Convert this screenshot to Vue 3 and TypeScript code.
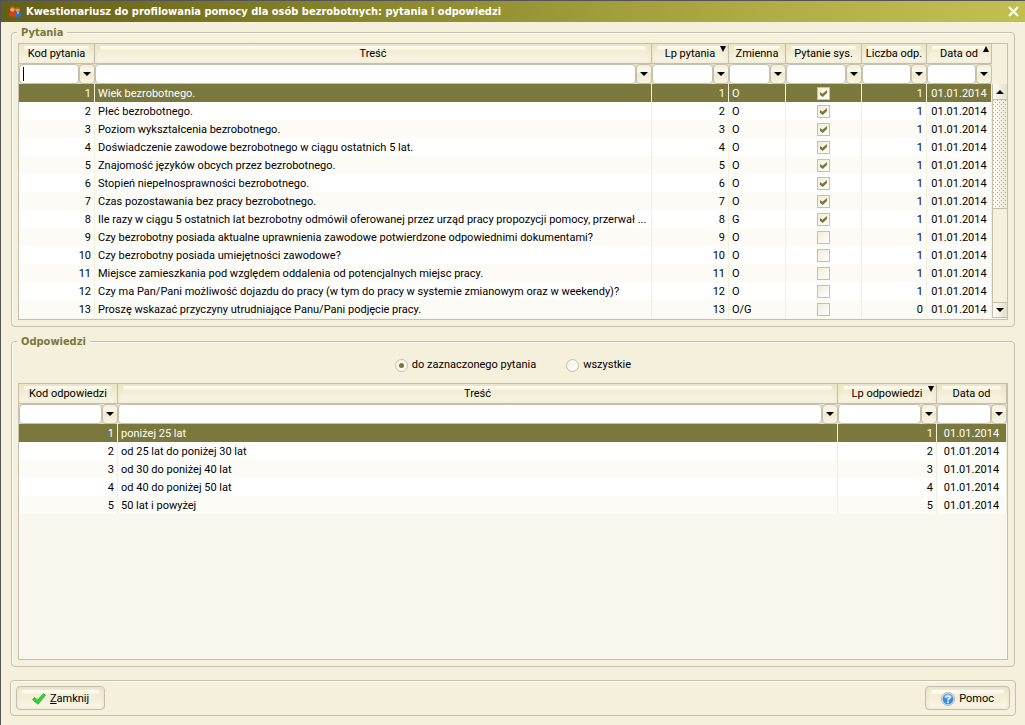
<script setup lang="ts">
import { ref } from 'vue'

interface Column {
  key: string
  label: string
  cls: string
  sort?: 'down' | 'up'
}

interface Question {
  code: number
  text: string
  variable: string
  system: boolean
  answers: number
}

interface Answer {
  code: number
  text: string
}

const questionColumns: Column[] = [
  { key: 'code', label: 'Kod pytania', cls: 'w76' },
  { key: 'text', label: 'Treść', cls: 'auto' },
  { key: 'order', label: 'Lp pytania', cls: 'w77', sort: 'down' },
  { key: 'variable', label: 'Zmienna', cls: 'w57' },
  { key: 'system', label: 'Pytanie sys.', cls: 'w76' },
  { key: 'answers', label: 'Liczba odp.', cls: 'w65' },
  { key: 'date', label: 'Data od', cls: 'w65', sort: 'up' },
]

const answerColumns: Column[] = [
  { key: 'code', label: 'Kod odpowiedzi', cls: 'w99' },
  { key: 'text', label: 'Treść', cls: 'auto' },
  { key: 'order', label: 'Lp odpowiedzi', cls: 'w99', sort: 'down' },
  { key: 'date', label: 'Data od', cls: 'w70' },
]

const date = '01.01.2014'

const questions: Question[] = [
  { code: 1, text: 'Wiek bezrobotnego.', variable: 'O', system: true, answers: 1 },
  { code: 2, text: 'Płeć bezrobotnego.', variable: 'O', system: true, answers: 1 },
  { code: 3, text: 'Poziom wykształcenia bezrobotnego.', variable: 'O', system: true, answers: 1 },
  { code: 4, text: 'Doświadczenie zawodowe bezrobotnego w ciągu ostatnich 5 lat.', variable: 'O', system: true, answers: 1 },
  { code: 5, text: 'Znajomość języków obcych przez bezrobotnego.', variable: 'O', system: true, answers: 1 },
  { code: 6, text: 'Stopień niepełnosprawności bezrobotnego.', variable: 'O', system: true, answers: 1 },
  { code: 7, text: 'Czas pozostawania bez pracy bezrobotnego.', variable: 'O', system: true, answers: 1 },
  { code: 8, text: 'Ile razy w ciągu 5 ostatnich lat bezrobotny odmówił oferowanej przez urząd pracy propozycji pomocy, przerwał ...', variable: 'G', system: true, answers: 1 },
  { code: 9, text: 'Czy bezrobotny posiada aktualne uprawnienia zawodowe potwierdzone odpowiednimi dokumentami?', variable: 'O', system: false, answers: 1 },
  { code: 10, text: 'Czy bezrobotny posiada umiejętności zawodowe?', variable: 'O', system: false, answers: 1 },
  { code: 11, text: 'Miejsce zamieszkania pod względem oddalenia od potencjalnych miejsc pracy.', variable: 'O', system: false, answers: 1 },
  { code: 12, text: 'Czy ma Pan/Pani możliwość dojazdu do pracy (w tym do pracy w systemie zmianowym oraz w weekendy)?', variable: 'O', system: false, answers: 1 },
  { code: 13, text: 'Proszę wskazać przyczyny utrudniające Panu/Pani podjęcie pracy.', variable: 'O/G', system: false, answers: 0 },
]

const answers: Answer[] = [
  { code: 1, text: 'poniżej 25 lat' },
  { code: 2, text: 'od 25 lat do poniżej 30 lat' },
  { code: 3, text: 'od 30 do poniżej 40 lat' },
  { code: 4, text: 'od 40 do poniżej 50 lat' },
  { code: 5, text: '50 lat i powyżej' },
]

const selectedQuestion = ref(1)
const selectedAnswer = ref(1)
const scope = ref('selected')
</script>

<template>
  <main class="window">
    <header class="titlebar">
      <svg class="app-icon" viewBox="0 0 12 12" aria-hidden="true">
        <path d="M6 11V8.500Q6 6 9 6Q12 6 12 8.500V10.500Z" fill="#2f6fd0" />
        <path d="M0 10V8Q0 5.500 3.500 5.500Q7 5.500 7 8V11Z" fill="#d8401c" />
        <circle cx="8.600" cy="3.800" r="2.300" fill="#e89a50" />
        <path d="M6.200 3.500Q6.500 1 8.800 1Q11 1 11 3.500L9 2.500Z" fill="#a85a18" />
        <circle cx="3.400" cy="3.400" r="2.400" fill="#f6a55c" />
        <path d="M1 3.200Q1 .5 3.400 .5Q5.800 .5 5.800 3.200L3.400 2Z" fill="#d0601c" />
        <path d="M8.200 6.300L9 8.500L9.800 6.300Z" fill="#fff" />
      </svg>
      <h1>Kwestionariusz do profilowania pomocy dla osób bezrobotnych: pytania i odpowiedzi</h1>
      <button class="close" type="button" aria-label="Zamknij okno">
        <svg viewBox="0 0 11 11"><path d="M1 1L10 10M10 1L1 10" stroke="#fff" stroke-width="2" fill="none" /></svg>
      </button>
    </header>

    <div class="content">
      <section class="group" role="group" aria-labelledby="questions-title">
        <h2 id="questions-title">Pytania</h2>
        <div class="frame">
          <table>
            <colgroup>
              <col v-for="c in questionColumns" :key="c.key" :class="c.cls" />
              <col class="w15" />
            </colgroup>
            <thead>
              <tr>
                <th v-for="c in questionColumns" :key="c.key" scope="col">
                  <div class="head">
                    <span>{{ c.label }}</span>
                    <svg v-if="c.sort" class="sort" viewBox="0 0 6 6" aria-hidden="true">
                      <path :d="c.sort === 'down' ? 'M0 0H6L3 6Z' : 'M0 6H6L3 0Z'" />
                    </svg>
                  </div>
                </th>
                <td class="blank"></td>
              </tr>
              <tr class="filters">
                <td v-for="c in questionColumns" :key="c.key">
                  <div class="filter">
                    <input type="text" :aria-label="'Filtr: ' + c.label" />
                    <span v-if="c.key === 'code'" class="caret"></span>
                    <button type="button" :aria-label="'Wybierz: ' + c.label">
                      <svg viewBox="0 0 8 4"><path d="M0 0H8L4 4Z" /></svg>
                    </button>
                  </div>
                </td>
                <td class="blank"></td>
              </tr>
            </thead>
            <tbody>
              <tr
                v-for="(q, i) in questions"
                :key="q.code"
                :class="{ selected: selectedQuestion === q.code }"
                @click="selectedQuestion = q.code"
              >
                <td class="right">{{ q.code }}</td>
                <td>{{ q.text }}</td>
                <td class="right">{{ q.code }}</td>
                <td>{{ q.variable }}</td>
                <td class="center">
                  <input class="tick" type="checkbox" :checked="q.system" disabled :aria-label="'Pytanie systemowe ' + q.code" />
                </td>
                <td class="right">{{ q.answers }}</td>
                <td class="center">{{ date }}</td>
                <td v-if="i === 0" class="scroll-cell" :rowspan="questions.length">
                  <div class="scrollbar">
                    <button type="button" aria-label="W górę">
                      <svg viewBox="0 0 8 4"><path d="M0 4H8L4 0Z" /></svg>
                    </button>
                    <div class="track"><div class="thumb"></div></div>
                    <button type="button" aria-label="W dół">
                      <svg viewBox="0 0 8 4"><path d="M0 0H8L4 4Z" /></svg>
                    </button>
                  </div>
                </td>
              </tr>
            </tbody>
          </table>
        </div>
      </section>

      <section class="group answers" role="group" aria-labelledby="answers-title">
        <h2 id="answers-title">Odpowiedzi</h2>
        <div class="scope">
          <label><input v-model="scope" type="radio" name="scope" value="selected" />do zaznaczonego pytania</label>
          <label><input v-model="scope" type="radio" name="scope" value="all" />wszystkie</label>
        </div>
        <div class="frame grow">
          <table>
            <colgroup>
              <col v-for="c in answerColumns" :key="c.key" :class="c.cls" />
            </colgroup>
            <thead>
              <tr>
                <th v-for="c in answerColumns" :key="c.key" scope="col">
                  <div class="head">
                    <span>{{ c.label }}</span>
                    <svg v-if="c.sort" class="sort" viewBox="0 0 6 6" aria-hidden="true"><path d="M0 0H6L3 6Z" /></svg>
                  </div>
                </th>
              </tr>
              <tr class="filters">
                <td v-for="c in answerColumns" :key="c.key">
                  <div class="filter">
                    <input type="text" :aria-label="'Filtr: ' + c.label" />
                    <button type="button" :aria-label="'Wybierz: ' + c.label">
                      <svg viewBox="0 0 8 4"><path d="M0 0H8L4 4Z" /></svg>
                    </button>
                  </div>
                </td>
              </tr>
            </thead>
            <tbody>
              <tr
                v-for="a in answers"
                :key="a.code"
                :class="{ selected: selectedAnswer === a.code }"
                @click="selectedAnswer = a.code"
              >
                <td class="right">{{ a.code }}</td>
                <td>{{ a.text }}</td>
                <td class="right">{{ a.code }}</td>
                <td class="center">{{ date }}</td>
              </tr>
            </tbody>
          </table>
        </div>
      </section>

      <footer class="actions">
        <button class="action" type="button">
          <svg class="ok" viewBox="0 0 14 12" aria-hidden="true">
            <path d="M.5 6.500L2.500 4.500L5.500 7L11.500 .700L13.500 2L6 11.300Z" fill="#35d435" stroke="#1fa81f" stroke-width=".8" stroke-linejoin="round" />
          </svg>
          <span><u>Z</u>amknij</span>
        </button>
        <button class="action" type="button">
          <svg class="help" viewBox="0 0 14 14" aria-hidden="true">
            <circle cx="7" cy="7" r="6.500" fill="#d9dde2" stroke="#a3a9b0" stroke-width=".8" />
            <circle cx="7" cy="7" r="5.300" fill="#3f8be0" />
            <path d="M2.500 5.500Q3.500 2.300 7 2.300Q10.500 2.300 11.500 5.500Q7 7.500 2.500 5.500Z" fill="#6fb0f2" />
            <path d="M5 5.500Q5 3.900 7 3.900Q9 3.900 9 5.400Q9 6.400 7.700 7Q7 7.400 7 8.400" fill="none" stroke="#fff" stroke-width="1.500" />
            <circle cx="7" cy="10.200" r=".95" fill="#fff" />
          </svg>
          <span>Pomoc</span>
        </button>
      </footer>
    </div>
  </main>
</template>

<style>
body {
  margin: 0;
  background: #f5f0dc;
}
</style>

<style scoped>
.window {
  --line: #c4bfae;
  --cream: #f5f0dc;
  --olive: #7a783c;
  display: flex;
  flex-direction: column;
  box-sizing: border-box;
  min-height: 100vh;
  border-left: 1px solid #55535a;
  background: var(--cream);
  color: #000;
  font: 11px/16px Roboto, "DejaVu Sans Condensed", sans-serif;
}
.window * {
  box-sizing: border-box;
}
button,
input {
  margin: 0;
  padding: 0;
  font: inherit;
  color: inherit;
}
.titlebar {
  display: flex;
  align-items: center;
  height: 22px;
  padding: 0 6px 0 8px;
  border-top: 1px solid #55535a;
  background: linear-gradient(90deg, #646018, #88852c 35%, #b0ad45 75%, #c2bf52);
}
.app-icon {
  width: 12px;
  height: 12px;
  margin-right: 5px;
}
h1,
h2 {
  margin: 0;
  font: bold 11px/14px "DejaVu Sans Condensed", "DejaVu Sans", sans-serif;
  white-space: nowrap;
}
h1 {
  flex: 1;
  color: #fff;
}
.close {
  width: 11px;
  height: 11px;
  border: 0;
  background: none;
}
.close svg {
  display: block;
}
.content {
  flex: 1;
  display: flex;
  flex-direction: column;
  padding: 10px 9px 9px;
}
.group {
  display: flex;
  flex-direction: column;
  margin: 0 1px 14px;
  padding: 0 6px 6px;
  border: 1px solid var(--line);
  border-radius: 4px;
  box-shadow: inset 1px 1px 0 #fffdf4;
}
h2 {
  align-self: flex-start;
  margin: -7px 0 3px -1px;
  padding: 0 4px;
  background: var(--cream);
  color: var(--olive);
}
.answers {
  flex: 1;
  margin-bottom: 13px;
}
.answers h2 {
  margin-bottom: 0;
}
.frame {
  padding-bottom: 1px;
  border: 1px solid var(--line);
  background: #faf7ee;
}
.grow {
  flex: 1;
}
table {
  width: 100%;
  table-layout: fixed;
  border-collapse: separate;
  border-spacing: 0;
}
.w15 { width: 15px; }
.w57 { width: 57px; }
.w65 { width: 65px; }
.w70 { width: 70px; }
.w76 { width: 76px; }
.w77 { width: 77px; }
.w99 { width: 99px; }
th,
td {
  height: 18px;
  padding: 0 3px;
  border-right: 1px solid var(--cream);
  font-weight: normal;
  text-align: left;
  white-space: nowrap;
  overflow: hidden;
}
tbody td {
  padding-top: 1px;
}
th {
  height: 20px;
  padding: 0;
  border-right-color: var(--line);
  border-bottom: 1px solid var(--line);
}
.head {
  position: relative;
  height: 19px;
  padding-top: 2px;
  text-align: center;
  background: linear-gradient(#ece6c8, #f1ecd3 40%, #fbf8ec);
  box-shadow: inset 0 0 5px #e9e2c2;
}
.head::before {
  content: "";
  position: absolute;
  inset: 2px 5px auto;
  height: 4px;
  border-radius: 2px;
  background: linear-gradient(#fffef6, #f6f2de);
}
.head span {
  position: relative;
}
.sort {
  position: absolute;
  top: 2px;
  right: 2px;
  width: 6px;
  height: 6px;
}
.filters td {
  height: 20px;
  padding: 0;
  border-right: 0;
}
.filter {
  position: relative;
  display: flex;
  height: 20px;
  background: #e4dfca;
}
.filter input {
  flex: 1;
  min-width: 0;
  border: 1px solid var(--line);
  border-radius: 4px;
  background: #fff;
  outline: 0;
}
.caret {
  position: absolute;
  top: 3px;
  left: 4px;
  width: 1px;
  height: 14px;
  background: #000;
}
.filter button {
  display: grid;
  place-items: center;
  width: 16px;
  border: 1px solid var(--line);
  border-radius: 4px;
  background: linear-gradient(#f3eed6, #fbf8ea 30%, #efe9d0 50%, #f9f5e6);
}
.filter button svg {
  width: 8px;
  height: 4px;
}
.blank,
.filters .blank {
  border: 0;
  background: var(--cream);
}
tbody tr {
  background: #fff;
}
tbody tr:nth-child(odd) {
  background: #fcfbf6;
}
tbody tr.selected > td {
  background: var(--olive);
  color: #fff;
}
.right {
  text-align: right;
}
.center {
  text-align: center;
}
.tick {
  appearance: none;
  display: block;
  width: 13px;
  height: 13px;
  margin: 0 auto;
  border: 1px solid var(--line);
  background: linear-gradient(135deg, #f2edd8, #fff);
}
.tick:checked::before {
  content: "";
  display: block;
  width: 7px;
  height: 7px;
  margin: 2px;
  background: var(--olive);
  clip-path: polygon(0 28%, 36% 54%, 100% 0, 100% 44%, 40% 100%, 0 72%);
}
tbody tr > .scroll-cell,
tbody tr.selected > .scroll-cell {
  padding: 0;
  border: 0;
  background: var(--cream);
}
.scrollbar {
  display: flex;
  flex-direction: column;
  height: 234px;
  border-left: 1px solid var(--line);
}
.scrollbar button {
  display: grid;
  place-items: center;
  height: 16px;
  border: 0;
  border-bottom: 1px solid var(--line);
  background: linear-gradient(90deg, #fffdf4, #e4dfca);
}
.scrollbar button:last-child {
  border-top: 1px solid var(--line);
}
.scrollbar svg {
  width: 8px;
  height: 4px;
}
.track {
  flex: 1;
}
.thumb {
  height: 54%;
  border-bottom: 1px solid var(--line);
  background:
    conic-gradient(at 1px 1px, transparent 75%, #b0aa94 0) 2px 2px / 4px 4px,
    conic-gradient(at 1px 1px, transparent 75%, #b0aa94 0) 4px 4px / 4px 4px,
    linear-gradient(90deg, #fffdf4, #ece7d4);
}
.scope {
  display: flex;
  justify-content: center;
  gap: 30px;
  height: 34px;
  padding-top: 7px;
}
.scope label {
  display: flex;
  align-items: center;
  gap: 4px;
  height: 17px;
  padding-top: 1px;
}
.scope input {
  appearance: none;
  width: 13px;
  height: 13px;
  border: 1px solid var(--line);
  border-radius: 50%;
  background: linear-gradient(135deg, #f5f0de, #fff);
}
.scope input:checked::before {
  content: "";
  display: block;
  width: 5px;
  height: 5px;
  margin: 3px;
  border-radius: 50%;
  background: var(--olive);
}
.actions {
  display: flex;
  justify-content: space-between;
  padding: 5px;
  border: 1px solid var(--line);
  border-radius: 4px;
  box-shadow: inset 1px 1px 0 #fffdf4;
}
.action {
  position: relative;
  display: flex;
  align-items: center;
  justify-content: center;
  gap: 4px;
  height: 24px;
  padding: 1px 15px 0;
  border: 1px solid var(--line);
  border-radius: 4px;
  background: linear-gradient(#efe9cf, #f3eed8 50%, #fbf8ec);
  box-shadow: inset 0 0 4px #e6dfbf;
}
.action::before {
  content: "";
  position: absolute;
  inset: 3px 5px auto;
  height: 4px;
  border-radius: 2px;
  background: linear-gradient(#fffef6, #f8f4e2);
}
.action span,
.action svg {
  position: relative;
}
.ok {
  width: 14px;
  height: 12px;
}
.help {
  width: 14px;
  height: 14px;
}
</style>
